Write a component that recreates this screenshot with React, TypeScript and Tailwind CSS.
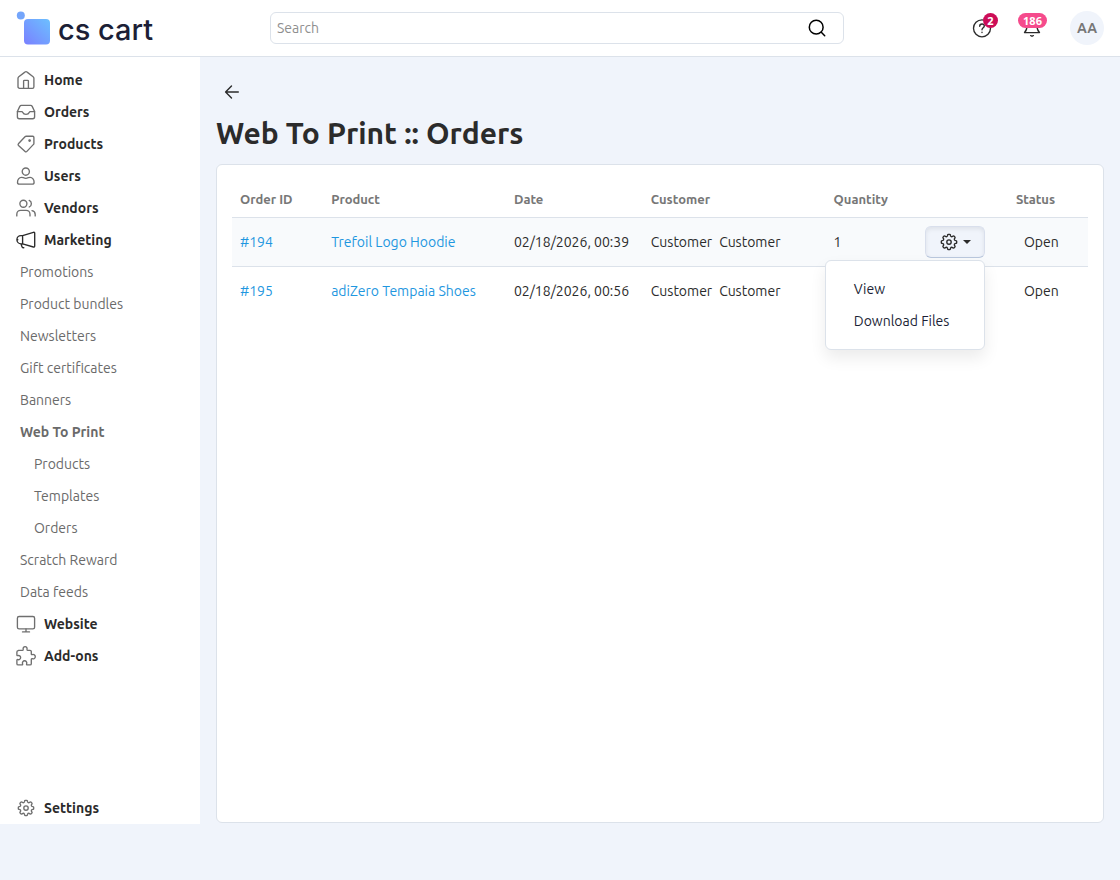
import { useState } from "react";
import type { ReactNode } from "react";

function Icon({ children, className = "text-[#6f6f6f]" }: { children: ReactNode; className?: string }) {
  return (
    <svg
      viewBox="0 0 20 20"
      fill="none"
      stroke="currentColor"
      strokeWidth="1.35"
      strokeLinecap="round"
      strokeLinejoin="round"
      aria-hidden="true"
      className={`size-5 shrink-0 ${className}`}
    >
      {children}
    </svg>
  );
}

function gearPath(): string {
  const at = (radius: number, degrees: number) => {
    const a = (degrees * Math.PI) / 180;
    return `${(10 + radius * Math.sin(a)).toFixed(2)} ${(10 - radius * Math.cos(a)).toFixed(2)}`;
  };
  let d = `M${at(6.2, -15)}`;
  for (let i = 0; i < 8; i++) {
    const t = i * 45;
    d += `L${at(7.1, t - 11)}Q${at(7.8, t - 9)} ${at(7.7, t - 5)}L${at(7.7, t + 5)}Q${at(7.8, t + 9)} ${at(7.1, t + 11)}`;
    d += `L${at(6.2, t + 15)}Q${at(5.5, t + 22.5)} ${at(6.2, t + 30)}`;
  }
  return d + "Z";
}

const gear = (
  <>
    <path d={gearPath()} />
    <circle cx="10" cy="10" r="2.2" />
  </>
);

const icons = {
  home: (
    <path d="M8.9 2.1a1.7 1.7 0 0 1 2.2 0l6 4.6c.5.4.8.9.8 1.5v8.5c0 .9-.6 1.6-1.5 1.6H3.6c-.9 0-1.6-.7-1.6-1.6V8.2c0-.6.3-1.1.8-1.5zM7.6 18.2v-7.1c0-.5.3-.8.8-.8h3.2c.5 0 .8.3.8.8v7.1" />
  ),
  orders: (
    <>
      <path d="M5.4 3.4h9.2c.7 0 1.3.4 1.6 1l2.4 5.1v5.3c0 1.1-.8 1.9-1.9 1.9H3.3c-1.1 0-1.9-.8-1.9-1.9V9.5l2.4-5.1c.3-.6.9-1 1.6-1z" />
      <path d="M1.4 9.6h4.3c.6 0 .9.4 1.1.9.4 1.1 1.5 1.9 3.2 1.9s2.8-.8 3.2-1.9c.2-.5.5-.9 1.1-.9h4.3" />
    </>
  ),
  products: (
    <>
      <path d="M10.1 2.2h6.6c.7 0 1.2.5 1.2 1.2v6c0 .4-.1.7-.4 1l-6.6 7c-.5.6-1.3.6-1.8.1l-6.6-6c-.5-.5-.5-1.2-.1-1.7l6.6-7.1c.3-.3.7-.5 1.1-.5z" />
      <circle cx="13.6" cy="6.5" r=".7" fill="currentColor" />
    </>
  ),
  users: (
    <>
      <circle cx="9.8" cy="5.6" r="3.6" />
      <path d="M5.5 11.3c1.3 0 2.5 1 4.3 1s3-1 4.3-1c2.4 0 4 2.5 4 4.9 0 1.1-.7 1.9-1.8 1.9h-13c-1.1 0-1.8-.8-1.8-1.9 0-2.4 1.6-4.9 4-4.9z" />
    </>
  ),
  vendors: (
    <>
      <circle cx="7.4" cy="5.7" r="3.5" />
      <path d="M.8 17.9v-1.5c0-2.2 1.6-4 3.8-4h5.6c2.2 0 3.8 1.8 3.8 4v1.5M13.2 2.4a3.6 3.6 0 0 1 0 6.6M16 12.6c2 .4 3.2 1.8 3.2 3.8v1.5" />
    </>
  ),
  marketing: (
    <>
      <path d="M6.6 5.6 17.4 2.3c.7-.2 1.3.2 1.3.9v12.9c0 .7-.6 1.1-1.3.9L6.6 13.8z" />
      <path d="M6.6 5.6H5A4.1 4.1 0 0 0 5 13.8h1.6M1 9.7h.8M4.9 13.8l1.2 3.1c.2.5.7.8 1.7.8" />
    </>
  ),
  website: (
    <>
      <rect x="1.4" y="2.5" width="17.2" height="12.4" rx="1.7" />
      <path d="M10 14.9v2.9M6.5 17.9h7" />
    </>
  ),
  addons: (
    <path d="M2.4 4.3h4.1c.7 0 .9-.5.7-1A2 2 0 1 1 11 3.3c-.2.5 0 1 .7 1H14c.8 0 1.3.5 1.3 1.3v2.3c0 .7.5.9 1 .7a2.2 2.2 0 1 1 0 4.1c-.5-.2-1 0-1 .7v4.3c0 .8-.5 1.2-1.3 1.2h-2.7c-.7 0-.9-.5-.7-1a2.2 2.2 0 1 0-4 0c.2.5 0 1-.7 1H2.2c-.8 0-1.3-.4-1.3-1.2v-3.4c0-.7.5-.9 1-.7a2.1 2.1 0 1 0 0-4c-.5.2-1 0-1-.7v-3c0-.8.6-1.3 1.5-1.3z" />
  ),
  settings: gear,
};

type NavEntry = { label: string; icon?: keyof typeof icons; level: 0 | 1 | 2; active?: boolean };

const nav: NavEntry[] = [
  { label: "Home", icon: "home", level: 0 },
  { label: "Orders", icon: "orders", level: 0 },
  { label: "Products", icon: "products", level: 0 },
  { label: "Users", icon: "users", level: 0 },
  { label: "Vendors", icon: "vendors", level: 0 },
  { label: "Marketing", icon: "marketing", level: 0, active: true },
  { label: "Promotions", level: 1 },
  { label: "Product bundles", level: 1 },
  { label: "Newsletters", level: 1 },
  { label: "Gift certificates", level: 1 },
  { label: "Banners", level: 1 },
  { label: "Web To Print", level: 1, active: true },
  { label: "Products", level: 2 },
  { label: "Templates", level: 2 },
  { label: "Orders", level: 2 },
  { label: "Scratch Reward", level: 1 },
  { label: "Data feeds", level: 1 },
  { label: "Website", icon: "website", level: 0 },
  { label: "Add-ons", icon: "addons", level: 0 },
];

function NavItem({ label, icon, level, active }: NavEntry) {
  const look =
    level === 0
      ? "pl-4 font-bold text-[#2b2b2b]"
      : level === 1
        ? `pl-5 text-[#6a6a6a] ${active ? "font-bold" : ""}`
        : "pl-[34px] text-[#6a6a6a]";
  return (
    <li>
      <a href="#" className={`flex h-8 items-center gap-2 ${look}`}>
        {icon && <Icon className={active ? "text-[#2b2b2b]" : "text-[#6f6f6f]"}>{icons[icon]}</Icon>}
        {label}
      </a>
    </li>
  );
}

function Header() {
  return (
    <header className="flex h-[57px] shrink-0 items-center border-b border-[#dce2ea] bg-white px-4">
      <a href="#" className="flex w-[254px] shrink-0 items-center gap-2">
        <svg viewBox="0 0 34 34" className="size-[34px]" aria-hidden="true">
          <defs>
            <linearGradient id="tile" x1="0" y1="1" x2="1" y2="0">
              <stop offset="0" stopColor="#7a80ff" />
              <stop offset="1" stopColor="#6cc0ff" />
            </linearGradient>
          </defs>
          <circle cx="4.8" cy="4.5" r="4" fill="#74a5fb" />
          <rect x="8" y="8" width="26" height="25.5" rx="4" fill="url(#tile)" />
        </svg>
        <span className="pt-1 font-['Inter'] text-[29px] leading-8 font-medium text-[#1c1f36]">cs cart</span>
      </a>
      <form role="search" className="flex h-8 max-w-[574px] grow items-center rounded-md border border-[#dce2ea]" onSubmit={(e) => e.preventDefault()}>
        <input
          type="search"
          aria-label="Search"
          placeholder="Search"
          className="h-full min-w-0 grow bg-transparent px-1.5 outline-none placeholder:text-[#8f8f8f]"
        />
        <button type="submit" aria-label="Search" className="mr-4 text-black">
          <svg viewBox="0 0 20 20" className="size-5" fill="none" stroke="currentColor" strokeWidth="1.5" strokeLinecap="round" aria-hidden="true">
            <circle cx="9.2" cy="9.2" r="6.9" />
            <path d="m14.3 14.3 3.4 3.4" />
          </svg>
        </button>
      </form>
      <div className="ml-auto flex items-center">
        <button type="button" aria-label="Help" className="relative mr-[30px] size-5">
          <Icon className="text-[#2b2b2b]">
            <circle cx="10" cy="10.3" r="8.5" />
            <path d="M7.7 8.2c0-1.3 1-2.2 2.3-2.2s2.3.9 2.3 2.1c0 1.7-2.3 1.8-2.3 3.7M10 14.2v.3" />
          </Icon>
          <span className="absolute top-[-5px] left-[11px] flex h-[15px] w-[15px] items-center justify-center rounded-full bg-[#cc0d57] font-['Noto_Sans'] text-[11px] font-bold text-white">
            2
          </span>
        </button>
        <button type="button" aria-label="Notifications" className="relative mr-7 size-5">
          <Icon className="text-[#2b2b2b]">
            <path d="M10 2.5a5 5 0 0 0-5 5c0 3.6-.8 5.5-2.5 7.1h15c-1.700-1.600-2.500-3.500-2.500-7.100a5 5 0 0 0-5-5zM8.600 17.600c.8.700 2 .7 2.800 0" />
          </Icon>
          <span className="absolute top-[-5px] left-[-4px] flex h-[15px] w-[29px] items-center justify-center rounded-full bg-[#f54b8c] font-['Noto_Sans'] text-[11px] font-bold text-white">
            186
          </span>
        </button>
        <button type="button" aria-label="Account" className="size-[34px] rounded-full bg-[#f0f4fb] font-bold text-[#777777]">
          AA
        </button>
      </div>
    </header>
  );
}

const orders = [
  { id: "#194", product: "Trefoil Logo Hoodie", date: "02/18/2026, 00:39", quantity: 1, status: "Open" },
  { id: "#195", product: "adiZero Tempaia Shoes", date: "02/18/2026, 00:56", quantity: 1, status: "Open" },
];

function RowActions({ open, onToggle }: { open: boolean; onToggle: () => void }) {
  return (
    <div className="relative w-[60px]">
      <button
        type="button"
        aria-label="Order actions"
        aria-expanded={open}
        onClick={onToggle}
        className={`flex h-8 w-full items-center justify-center gap-1 rounded-md border border-[#d9dfec] text-[#2b2b2b] ${open ? "border-b-[#b9c7dd] bg-[#f0f4fb] shadow-[inset_0_2px_4px_#00000014]" : "bg-white"}`}
      >
        <Icon className="text-[#2b2b2b]">{gear}</Icon>
        <svg viewBox="0 0 8 4" className="h-1 w-2" fill="currentColor" aria-hidden="true">
          <path d="M0 0h8L4 4z" />
        </svg>
      </button>
      {open && (
        <ul className="absolute top-[34px] right-0 z-10 w-40 rounded-md border border-[#dce2ea] bg-white py-3 shadow-[0_8px_16px_#00000014]">
          <li>
            <a href="#" className="block pl-7 leading-8 whitespace-nowrap text-[#1c1f36]">View</a>
          </li>
          <li>
            <a href="#" className="block pl-7 leading-8 whitespace-nowrap text-[#1c1f36]">Download Files</a>
          </li>
        </ul>
      )}
    </div>
  );
}

function OrdersTable() {
  const [openRow, setOpenRow] = useState<string | null>("#194");
  const line = "border-b border-[#dce2ea]";
  return (
    <table className="w-full table-fixed border-separate border-spacing-0 text-left">
      <colgroup>
        <col className="w-[10.65%]" />
        <col className="w-[21.35%]" />
        <col className="w-[16%]" />
        <col className="w-[21.35%]" />
        <col className="w-[10.65%]" />
        <col className="w-[10.65%]" />
        <col />
      </colgroup>
      <thead className="text-[13px] text-[#777777]">
        <tr className="h-[38px]">
          {["Order ID", "Product", "Date", "Customer", "Quantity", "", "Status"].map((title, i) => (
            <th key={i} scope="col" className={`px-2 pt-0.5 font-bold ${line}`}>
              {title}
            </th>
          ))}
        </tr>
      </thead>
      <tbody>
        {orders.map((order, i) => {
          const cell = `px-2 ${i === 0 ? `bg-[#f8fafc] ${line}` : ""}`;
          return (
            <tr key={order.id} className={`whitespace-nowrap ${i === 0 ? "h-[49px]" : "h-12"}`}>
              <td className={cell}>
                <a href="#" className="text-[#1f97e0]">{order.id}</a>
              </td>
              <td className={cell}>
                <a href="#" className="text-[#1f97e0]">{order.product}</a>
              </td>
              <td className={cell}>{order.date}</td>
              <td className={cell}>
                <span className="flex gap-[7px]">
                  <span>Customer</span>
                  <span>Customer</span>
                </span>
              </td>
              <td className={cell}>{order.quantity}</td>
              <td className={cell}>
                <RowActions
                  open={openRow === order.id}
                  onToggle={() => setOpenRow(openRow === order.id ? null : order.id)}
                />
              </td>
              <td className={cell}>
                <span className="pl-2">{order.status}</span>
              </td>
            </tr>
          );
        })}
      </tbody>
    </table>
  );
}

export default function App() {
  return (
    <div className="flex min-h-screen flex-col bg-[#f0f4fb] font-['Ubuntu','Noto_Sans',sans-serif] text-sm text-[#2b2b2b]">
      <Header />
      <div className="flex grow pb-14">
        <nav aria-label="Main" className="flex w-[200px] shrink-0 flex-col justify-between bg-white pt-[7px]">
          <ul>
            {nav.map((entry, i) => (
              <NavItem key={i} {...entry} />
            ))}
          </ul>
          <ul>
            <NavItem label="Settings" icon="settings" level={0} />
          </ul>
        </nav>
        <main className="flex min-w-0 grow flex-col px-4 pt-[19px] pb-px">
          <a href="#" aria-label="Back" className="flex size-8 items-center justify-center">
            <svg viewBox="0 0 16 16" className="size-4" fill="none" stroke="currentColor" strokeWidth="1.4" strokeLinecap="round" strokeLinejoin="round" aria-hidden="true">
              <path d="M14.3 8H1.8M7.5 2 1.6 8l5.900 6" />
            </svg>
          </a>
          <h1 className="mt-[5px] mb-[11px] text-[30px] leading-10 font-bold">Web To Print :: Orders</h1>
          <section className="grow rounded-md border border-[#dce2ea] bg-white p-[15px]">
            <OrdersTable />
          </section>
        </main>
      </div>
    </div>
  );
}
